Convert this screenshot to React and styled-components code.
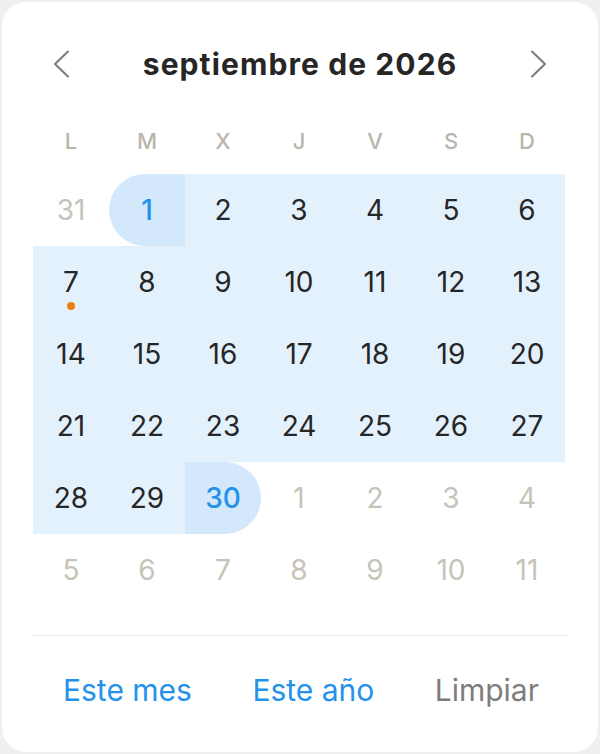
import React from 'react'
import styled, { createGlobalStyle } from 'styled-components'

const GlobalStyle = createGlobalStyle`
 html, body {
  margin: 0;
  padding: 0;
  background: #efefef;
 }
 body {
  font-family: Inter, "Noto Sans", sans-serif;
 }
`

const Page = styled.div`
 padding: 2px;
 box-sizing: border-box;
 width: 600px;
 height: 754px;
`

const Card = styled.div`
 box-sizing: border-box;
 height: 750px;
 width: 596px;
 background: #ffffff;
 border-radius: 24px;
 padding: 40px 31px 0;
 display: flex;
 flex-direction: column;
`

const Header = styled.div`
 height: 44px;
 display: flex;
 align-items: center;
 justify-content: space-between;
`

const NavButton = styled.button`
 width: 44px;
 height: 44px;
 display: flex;
 align-items: center;
 justify-content: center;
 border: none;
 background: transparent;
 padding: 0;
 margin: ${(p) => (p.$right ? '0 6px 0 0' : '0 0 0 6px')};
 cursor: pointer;
`

const Title = styled.h2`
 margin: 0;
 font-size: 30px;
 font-weight: 700;
 letter-spacing: 1.1px;
 color: #262626;
`

const Weekdays = styled.div`
 display: grid;
 grid-template-columns: repeat(7, 76px);
 height: 50px;
 margin-top: 30px;
 margin-bottom: 8px;
`

const Weekday = styled.div`
 display: flex;
 align-items: center;
 justify-content: center;
 font-size: 22px;
 font-weight: 500;
 color: #b9b5ab;
`

const Grid = styled.div`
 display: grid;
 grid-template-columns: repeat(7, 76px);
 grid-auto-rows: 72px;
`

const Day = styled.div`
 position: relative;
 display: flex;
 align-items: center;
 justify-content: center;
 font-size: 28px;
 color: ${(p) => (p.$muted ? '#c6c3b9' : p.$edge ? '#2492ea' : '#262626')};
 font-weight: ${(p) => (p.$edge ? 500 : 400)};
 background: ${(p) => (p.$edge ? '#d3e8fb' : p.$inRange ? '#e3f1fd' : 'transparent')};
 border-radius: ${(p) =>
  p.$edge === 'start' ? '36px 0 0 36px' : p.$edge === 'end' ? '0 36px 36px 0' : '0'};
`

const Dot = styled.span`
 position: absolute;
 left: 50%;
 top: 56px;
 width: 8px;
 height: 8px;
 margin-left: -4px;
 border-radius: 50%;
 background: #ec7f10;
`

const Divider = styled.div`
 height: 1px;
 background: #ebebeb;
 margin-top: 29px;
`

const Footer = styled.div`
 height: 108px;
 display: flex;
 align-items: center;
 justify-content: space-between;
 padding: 0 28px 0 30px;
`

const Action = styled.button`
 border: none;
 background: transparent;
 padding: 0;
 font-family: inherit;
 font-size: 30px;
 color: ${(p) => (p.$muted ? '#7d7d7d' : '#2492ea')};
 cursor: pointer;
`

const Chevron = ({ right }) => (
 <svg width="18" height="28" viewBox="0 0 18 28" fill="none">
  <polyline
   points={right ? '2,1.5 15,14 2,26.5' : '16,1.5 3,14 16,26.5'}
   stroke="#7b7b7b"
   strokeWidth="2"
   strokeLinecap="round"
   strokeLinejoin="round"
  />
 </svg>
)

const weekdays = ['L', 'M', 'X', 'J', 'V', 'S', 'D']

// septiembre 2026 empieza en martes
const buildDays = () => {
 const days = [{ n: 31, muted: true }]
 for (let i = 1; i <= 30; i++) days.push({ n: i })
 for (let i = 1; i <= 11; i++) days.push({ n: i, muted: true })
 return days
}

export default function App() {
 const days = buildDays()
 return (
  <>
   <GlobalStyle />
   <Page>
    <Card>
     <Header>
      <NavButton aria-label="anterior">
       <Chevron />
      </NavButton>
      <Title>septiembre de 2026</Title>
      <NavButton $right aria-label="siguiente">
       <Chevron right />
      </NavButton>
     </Header>
     <Weekdays>
      {weekdays.map((w) => (
       <Weekday key={w}>{w}</Weekday>
      ))}
     </Weekdays>
     <Grid>
      {days.map((d, i) => {
       const inRange = !d.muted
       const edge = !d.muted && d.n === 1 ? 'start' : !d.muted && d.n === 30 ? 'end' : undefined
       return (
        <Day key={i} $muted={d.muted} $inRange={inRange} $edge={edge}>
         {d.n}
         {!d.muted && d.n === 7 && <Dot />}
        </Day>
       )
      })}
     </Grid>
     <Divider />
     <Footer>
      <Action>Este mes</Action>
      <Action>Este año</Action>
      <Action $muted>Limpiar</Action>
     </Footer>
    </Card>
   </Page>
  </>
 )
}
